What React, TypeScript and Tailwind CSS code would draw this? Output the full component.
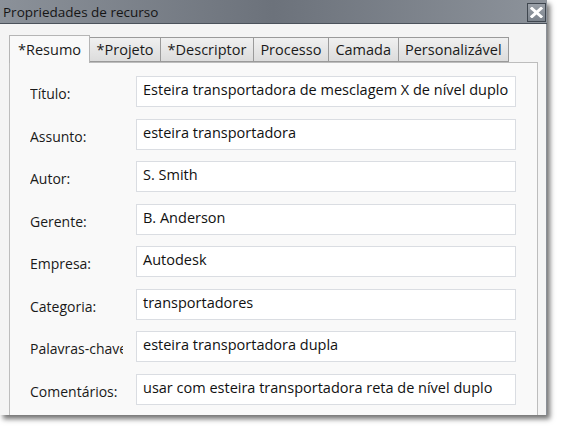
const tabs = ['*Resumo', '*Projeto', '*Descriptor', 'Processo', 'Camada', 'Personalizável']

const fields: [string, string][] = [
  ['Título:', 'Esteira transportadora de mesclagem X de nível duplo'],
  ['Assunto:', 'esteira transportadora'],
  ['Autor:', 'S. Smith'],
  ['Gerente:', 'B. Anderson'],
  ['Empresa:', 'Autodesk'],
  ['Categoria:', 'transportadores'],
  ['Palavras-chave:', 'esteira transportadora dupla'],
  ['Comentários:', 'usar com esteira transportadora reta de nível duplo'],
]

function CloseButton() {
  return (
    <div className="mt-[3px] mr-[1px] w-[19px] h-[19px] border border-[#3f464f] bg-gradient-to-b from-[#9aa0a8] to-[#7c838c] flex items-center justify-center">
      <svg width="13" height="11" viewBox="0 0 13 11">
        <path d="M2 1.5 L11 9.5 M11 1.5 L2 9.5" stroke="#ffffff" strokeWidth="3" strokeLinecap="square" />
      </svg>
    </div>
  )
}

export default function App() {
  return (
    <div className="w-[562px] h-[430px] bg-white overflow-hidden" style={{ fontFamily: '"Open Sans", "Noto Sans", sans-serif' }}>
      <div className="w-[547px] h-[415px] flex flex-col shadow-[3px_4px_5px_rgba(0,0,0,0.55)]">
        {/* title bar */}
        <div className="h-[24px] flex items-start justify-between border-b border-[#4b525b] bg-gradient-to-r from-[#8b9199] via-[#6c727b] to-[#8d939b]">
          <span className="pl-[3px] pt-[2px] text-[13.5px] leading-[20px] text-[#151515]">Propriedades de recurso</span>
          <CloseButton />
        </div>

        {/* body */}
        <div className="flex-1 flex flex-col bg-[#f4f4f4] pl-[9px] pr-[8px] pt-[11px] border-r border-[#8a8f96]">
          <div className="flex items-end h-[27px]">
            {tabs.map((t, i) =>
              i === 0 ? (
                <div key={t} className="h-[28px] -mb-[1px] px-[8px] border border-b-0 border-[#b5b5b5] bg-[#f9f9f9] text-[14.5px] text-[#1a1a1a] flex items-center relative z-10">
                  {t}
                </div>
              ) : (
                <div key={t} className="h-[25px] -ml-[1px] px-[6.5px] border border-[#9a9a9a] bg-gradient-to-b from-[#f0f0f0] to-[#dcdcdc] text-[14.5px] text-[#1a1a1a] flex items-center">
                  {t}
                </div>
              )
            )}
          </div>
          <div className="flex-1 border border-b-0 border-[#bdbdbd] bg-[#f9f9f9] pl-[20px] pr-[21px] pt-[13px] flex flex-col gap-[11.5px]">
            {fields.map(([label, value]) => (
              <div key={label} className="flex items-center h-[31px]">
                <div className="w-[93px] mr-[13px] overflow-hidden whitespace-nowrap text-[14px] text-[#1a1a1a] pt-[4px]">
                  {label}
                </div>
                <div className="flex-1 h-[31px] bg-white border border-[#dadde2] pl-[6px] flex items-center text-[14.5px] text-[#111] whitespace-nowrap overflow-hidden pb-[3px]">
                  {value}
                </div>
              </div>
            ))}
          </div>
        </div>
      </div>
    </div>
  )
}
